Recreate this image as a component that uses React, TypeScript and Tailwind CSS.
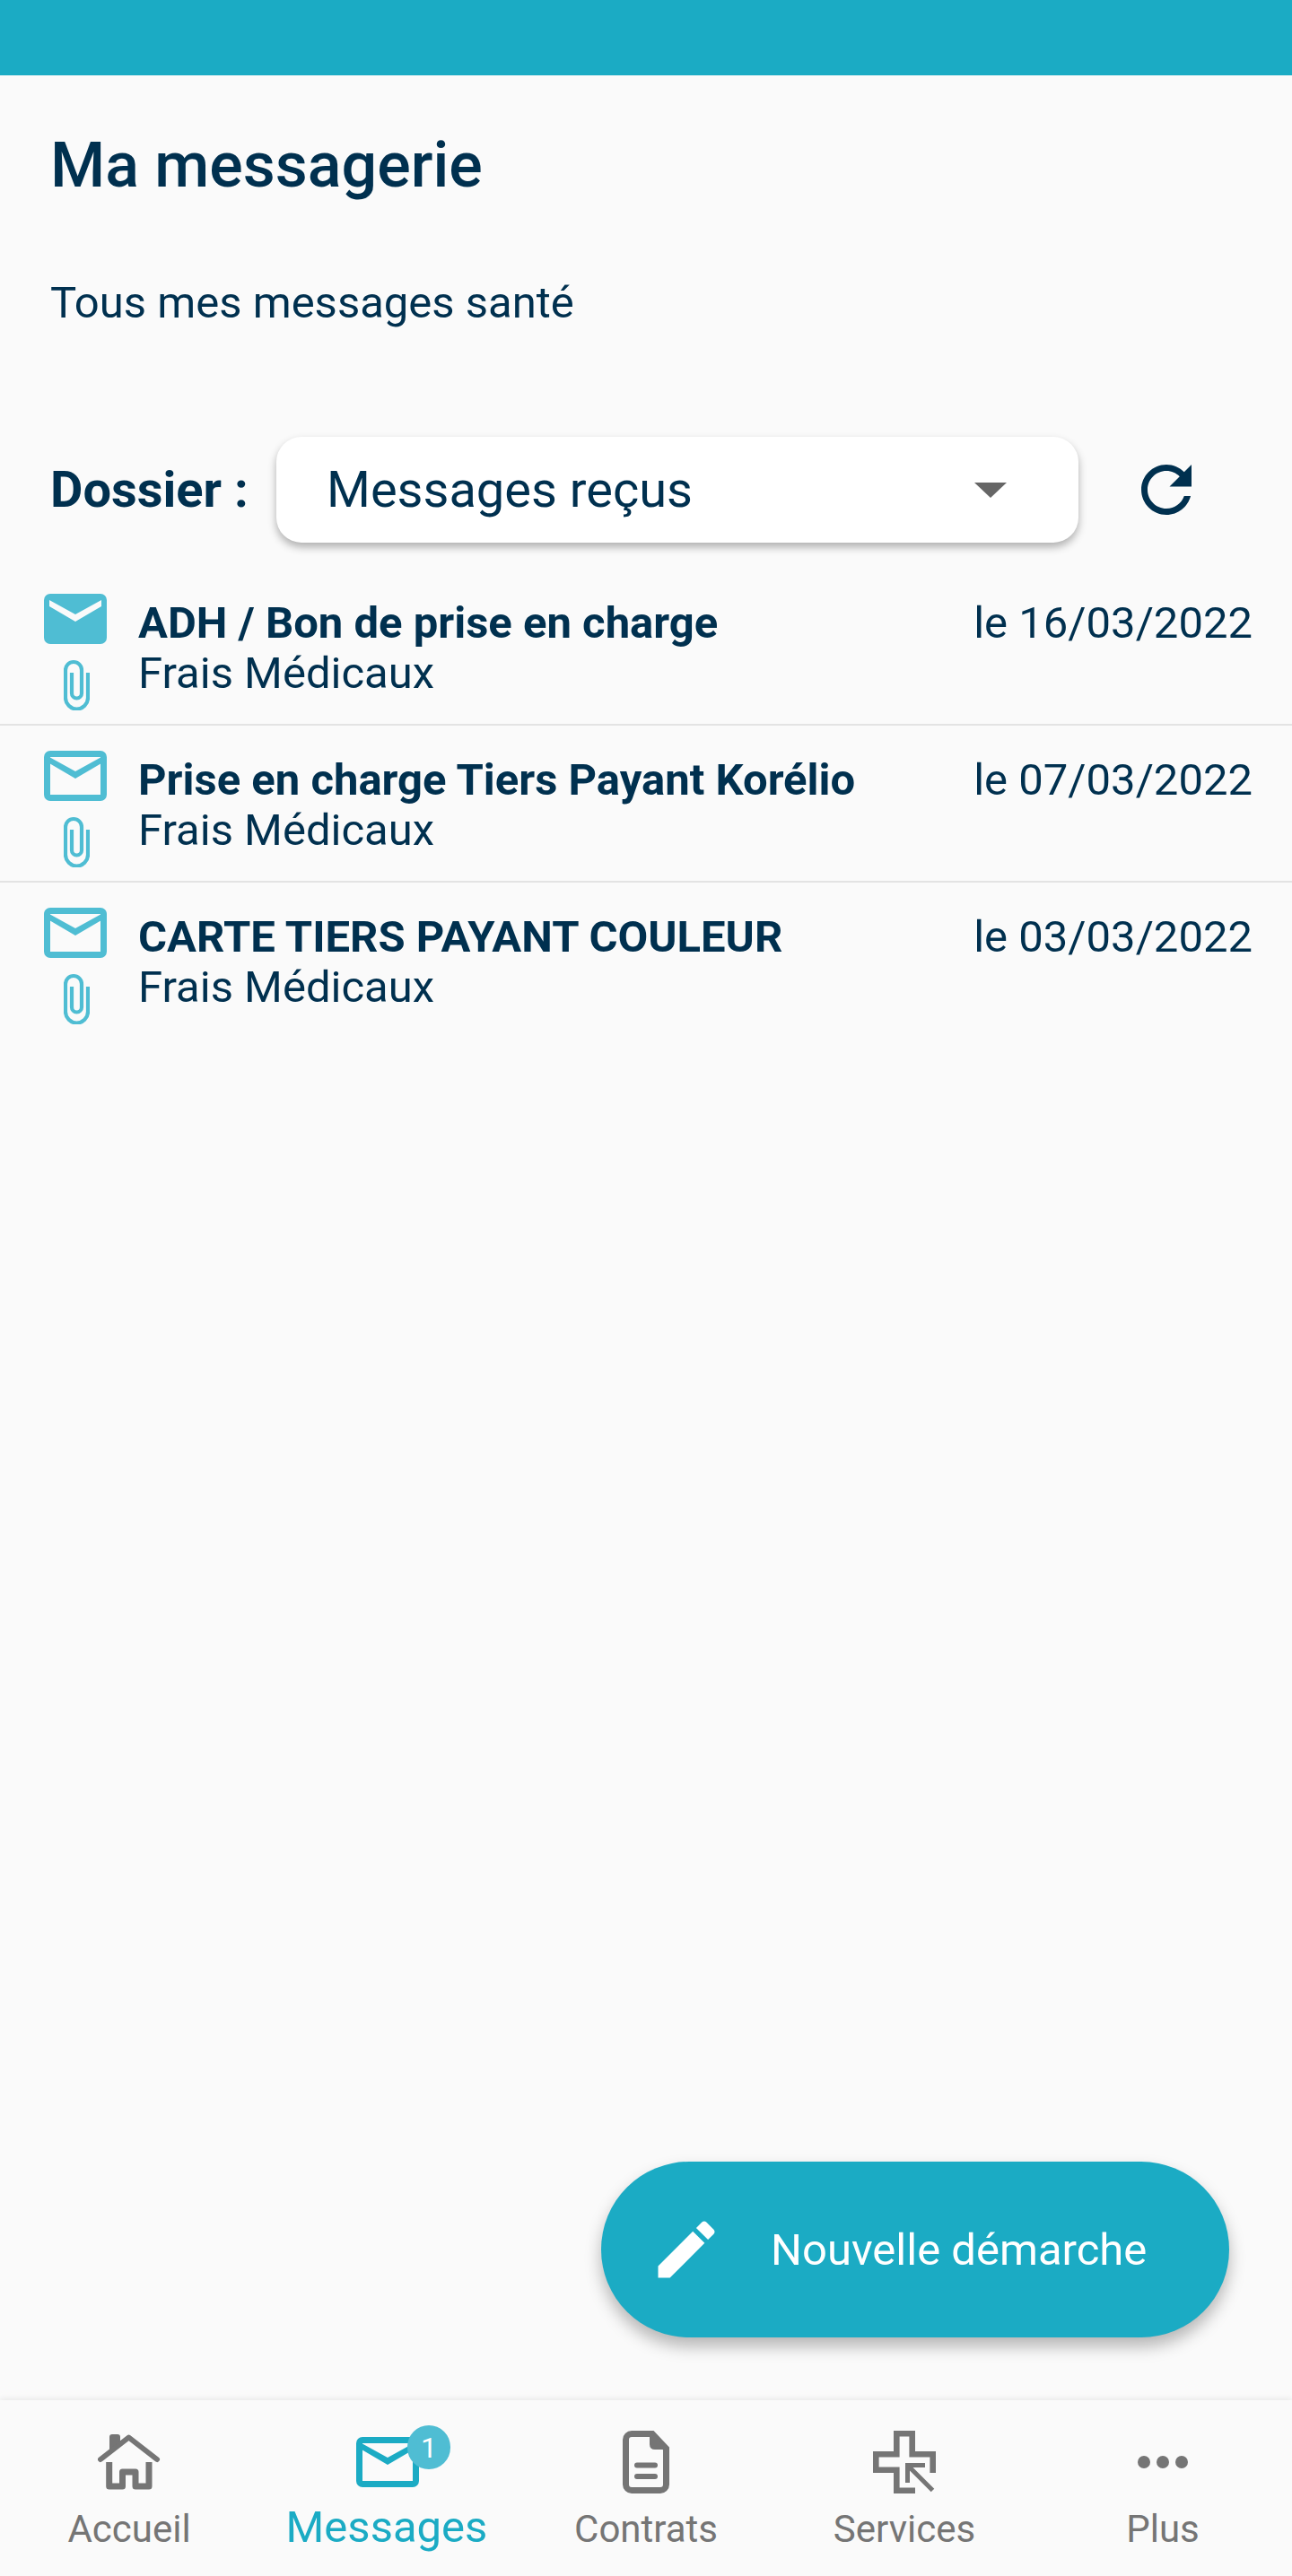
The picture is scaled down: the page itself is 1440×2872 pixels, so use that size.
const messages = [
  { title: "ADH / Bon de prise en charge", date: "le 16/03/2022", unread: true },
  { title: "Prise en charge Tiers Payant Korélio", date: "le 07/03/2022", unread: false },
  { title: "CARTE TIERS PAYANT COULEUR", date: "le 03/03/2022", unread: false },
];

function MailIcon({ unread, color }: { unread: boolean; color: string }) {
  return (
    <svg viewBox="0 0 70 56" className="h-[56px] w-[70px]">
      {unread ? (
        <>
          <rect width="70" height="56" rx="7" fill={color} />
          <polygon points="6,7 35,23 64,7 64,14 35,31 6,14" fill="#fafafa" />
        </>
      ) : (
        <>
          <rect x="3.5" y="3.5" width="63" height="49" rx="3.5" fill="none" stroke={color} strokeWidth="7" />
          <polygon points="6,7 35,23 64,7 64,14 35,31 6,14" fill={color} />
        </>
      )}
    </svg>
  );
}

function ClipIcon() {
  return (
    <svg viewBox="0 0 29 57" className="h-[57px] w-[29px]" fill="none" stroke="#4fbdd3" strokeWidth="4.2">
      <path d="M27 15V43A12.5 12.5 0 0 1 2 43V12A9 9 0 0 1 20 12V38A5.5 5.5 0 0 1 9 38V15" />
    </svg>
  );
}

function HomeIcon() {
  return (
    <svg viewBox="0 0 70 62" className="h-[62px] w-[70px]" fill="none" stroke="#757575">
      <path d="M13 18V3Q13 0 16 0H22Q25 0 25 3V12Z" fill="#757575" stroke="none" />
      <path d="M3 28L34.5 3.5L66 28" strokeWidth="6" strokeLinecap="round" strokeLinejoin="round" />
      <path d="M12.7 31V58H27.5V42H42V58H57V31" strokeWidth="7" strokeLinejoin="round" />
    </svg>
  );
}

function DocIcon() {
  return (
    <svg viewBox="0 0 52 70" className="h-[70px] w-[52px]" fill="none" stroke="#757575">
      <path d="M10 3.5H33L48.5 20V60A6.5 6.5 0 0 1 42 66.5H10A6.5 6.5 0 0 1 3.5 60V10A6.5 6.5 0 0 1 10 3.5Z" strokeWidth="7" />
      <path d="M30 1L51 21H36Q30 21 30 15Z" fill="#757575" stroke="none" />
      <path d="M16 38.5H36M16 51H36" strokeWidth="6" strokeLinecap="round" />
    </svg>
  );
}

function ServicesIcon() {
  return (
    <svg viewBox="0 0 70 70" className="h-[70px] w-[70px]" fill="none" stroke="#757575">
      <path d="M47 66.7H26.3V43.7H3.3V26.3H26.3V3.3H43.7V26.3H66.7V47" strokeWidth="6.6" />
      <path d="M58 38.5H38.5V58M40 40L66.5 66.5" strokeWidth="5" />
    </svg>
  );
}

function DotsIcon() {
  return (
    <svg viewBox="0 0 56 14" className="h-[14px] w-[56px]" fill="#757575">
      <circle cx="7" cy="7" r="7" />
      <circle cx="28" cy="7" r="7" />
      <circle cx="49" cy="7" r="7" />
    </svg>
  );
}

function NavItem({ label, active, children }: { label: string; active?: boolean; children: React.ReactNode }) {
  return (
    <div className="flex w-[288px] flex-col items-center">
      <div className="relative flex h-[70px] items-center justify-center">{children}</div>
      <span
        className={
          active
            ? "mr-[2px] mt-[11px] text-[49px] leading-[54px] text-[#1babc4]"
            : "mt-[15px] text-[42px] leading-[50px] text-[#757575]"
        }
      >
        {label}
      </span>
    </div>
  );
}

export default function App() {
  return (
    <div className="relative flex h-[2872px] flex-col overflow-hidden bg-[#fafafa] font-[Roboto,sans-serif] text-[#00304f]">
      <div className="h-[84px] shrink-0 bg-[#1babc4]" />

      <main className="flex-1">
        <h1 className="pl-[56px] pt-[59px] text-[70px] font-medium leading-[82px]">Ma messagerie</h1>
        <p className="mt-[85px] pl-[56px] text-[49px] leading-[56px]">Tous mes messages santé</p>

        <div className="mt-[121px] flex items-center pl-[56px]">
          <span className="w-[252px] shrink-0 text-[56px] font-bold leading-[60px]">Dossier :</span>
          <div className="flex h-[118px] w-[894px] items-center justify-between rounded-[28px] bg-white pl-[56px] pr-[80px] shadow-[0_5px_10px_rgba(0,0,0,0.3)]">
            <span className="text-[56px] leading-[64px]">Messages reçus</span>
            <svg viewBox="0 0 36 17" className="h-[17px] w-[36px]" fill="#666666">
              <polygon points="0,0 36,0 18,17" />
            </svg>
          </div>
          <svg viewBox="0 0 24 24" className="ml-[56px] h-[84px] w-[84px]" fill="#00304f">
            <path d="M17.65 6.35C16.2 4.9 14.21 4 12 4c-4.42 0-7.99 3.58-7.99 8s3.57 8 7.99 8c3.73 0 6.84-2.55 7.73-6h-2.08c-.82 2.33-3.04 4-5.65 4-3.31 0-6-2.69-6-6s2.69-6 6-6c1.66 0 3.14.69 4.22 1.78L13 11h7V4l-2.35 2.35z" />
          </svg>
        </div>

        <ul className="mt-[29px]">
          {messages.map((m, i) => (
            <li
              key={m.title}
              className={
                i < messages.length - 1
                  ? "flex h-[175px] border-b-[2px] border-[#e3e3e3] pl-[49px] pr-[44px] pt-[28px]"
                  : "flex h-[175px] pl-[49px] pr-[44px] pt-[28px]"
              }
            >
              <div className="flex w-[70px] shrink-0 flex-col items-center gap-[17px]">
                <MailIcon unread={m.unread} color="#4fbdd3" />
                <div className="pl-[2px]">
                  <ClipIcon />
                </div>
              </div>
              <div className="ml-[35px] flex-1 pt-[5px]">
                <div className="flex justify-between">
                  <span className="text-[49px] font-bold leading-[56px]">{m.title}</span>
                  <span className="text-[49px] leading-[56px]">{m.date}</span>
                </div>
                <div className="text-[49px] leading-[56px]">Frais Médicaux</div>
              </div>
            </li>
          ))}
        </ul>
      </main>

      <button className="absolute bottom-[266px] right-[70px] flex h-[196px] w-[700px] items-center rounded-full bg-[#1babc4] pl-[53px] text-[49px] text-white shadow-[0_10px_18px_rgba(0,0,0,0.28)]">
        <svg viewBox="0 0 24 24" className="h-[84px] w-[84px]" fill="#ffffff">
          <path d="M3 17.25V21h3.75L17.81 9.94l-3.75-3.75L3 17.25zM20.71 7.04c.39-.39.39-1.02 0-1.41l-2.34-2.34c-.39-.39-1.02-.39-1.41 0l-1.83 1.83 3.75 3.75 1.83-1.83z" />
        </svg>
        <span className="ml-[52px] pt-[2px] leading-[56px]">Nouvelle démarche</span>
      </button>

      <nav className="flex h-[196px] shrink-0 bg-[#fafafa] pt-[34px] shadow-[0_-2px_6px_rgba(0,0,0,0.07)]">
        <NavItem label="Accueil">
          <HomeIcon />
        </NavItem>
        <NavItem label="Messages" active>
          <MailIcon unread={false} color="#1babc4" />
          <span className="absolute left-[57px] top-[-6px] flex h-[49px] w-[48px] items-center justify-center rounded-full bg-[#4fbdd3] text-[32px] leading-none text-white">
            1
          </span>
        </NavItem>
        <NavItem label="Contrats">
          <DocIcon />
        </NavItem>
        <NavItem label="Services">
          <ServicesIcon />
        </NavItem>
        <NavItem label="Plus">
          <DotsIcon />
        </NavItem>
      </nav>
    </div>
  );
}
